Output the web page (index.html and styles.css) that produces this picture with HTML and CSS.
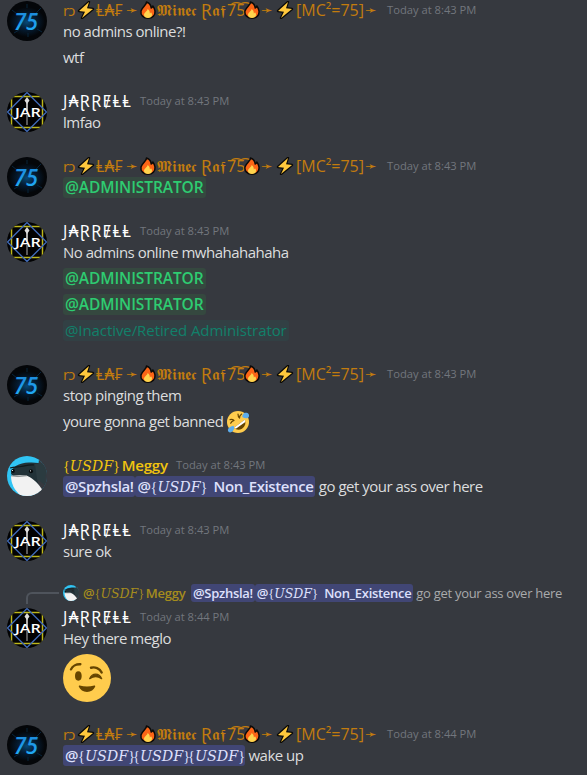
FILE: index.html
```
<!DOCTYPE html>
<html lang="en">
<head>
<meta charset="utf-8">
<title>Chat</title>
<link rel="stylesheet" href="styles.css">
</head>
<body>
<svg class="defs" aria-hidden="true">
  <defs>
    <radialGradient id="glow"><stop offset="0" stop-color="#064a78"/><stop offset=".5" stop-color="#051c32"/><stop offset="1" stop-color="#040609"/></radialGradient>
    <linearGradient id="blue" x1="0" y1="0" x2="0" y2="1"><stop offset="0" stop-color="#1b7fd4"/><stop offset="1" stop-color="#21b4fb"/></linearGradient>
    <clipPath id="round"><circle cx="20" cy="20" r="20"/></clipPath>
    <symbol id="av-raf" viewBox="0 0 40 40">
      <circle cx="20" cy="20" r="20" fill="#040609"/>
      <ellipse cx="20" cy="21" rx="18" ry="15" fill="url(#glow)"/>
      <path d="M5 9l5 4M34 7l-5 5M7 32l5-3M35 31l-5-3M20 3v4M21 36v-4" stroke="#07243b" stroke-width="1"/>
      <text class="raf-num" x="7" y="29" textLength="24" lengthAdjust="spacingAndGlyphs" fill="url(#blue)">75</text>
    </symbol>
    <symbol id="av-jar" viewBox="0 0 40 40">
      <g clip-path="url(#round)">
        <rect width="40" height="40" fill="#020203"/>
        <rect x="4.500" y="4.500" width="31" height="31" fill="none" stroke="#bdb71b" stroke-width="1.500"/>
        <path d="M20 .5L39.500 20 20 39.500.5 20z" fill="none" stroke="#3f69b5" stroke-width="1.400"/>
        <text class="jar-text" x="8" y="24.500" textLength="26" lengthAdjust="spacingAndGlyphs" fill="#fff">JAR</text>
        <path d="M20 7v12" stroke="#e8e8e8" stroke-width="1.500"/><path d="M20 5l2.500 3.500L20 12l-2.500-3.500z" fill="#ddd"/>
        <path d="M20 23v10" stroke="#777" stroke-width="1.500"/>
      </g>
    </symbol>
    <symbol id="av-whale" viewBox="0 0 40 40">
      <g clip-path="url(#round)">
        <rect width="40" height="40" fill="#30c4f4"/>
        <path d="M4 18C4 11 12 7 22 6.500c6-.3 11 .5 14 2L40 10v30H30z" fill="#223238"/>
        <path d="M32 3l6 0 4 8v29h-8l-4-18z" fill="#36393f"/>
        <path d="M28 8l8-1 3 8-1 14-8-6z" fill="#2b3b40"/>
        <path d="M4 20c6-1 11-1 16-.3 7 3.300 12 8.300 16 15.300L27 40H14C7 34 4 27 4 20z" fill="#f2f2f2"/>
        <path d="M4 19.800l7 .8 9-.9" fill="none" stroke="#8b9294" stroke-width="1"/>
        <path d="M3 12c4-1 8-1 11-1.500s9-2 13-1.500" fill="none" stroke="#10191c" stroke-width="1.200"/>
        <circle cx="6" cy="15" r="1.900" fill="#070b0d"/><circle cx="24" cy="15.300" r="2" fill="#070b0d"/>
        <circle cx="5.500" cy="14.500" r=".6" fill="#fff"/><circle cx="23.500" cy="14.800" r=".6" fill="#fff"/>
      </g>
    </symbol>
    <symbol id="bolt" viewBox="0 0 18 18">
      <path d="M12 1L2 10l6 .8L5 17 16 8l-6-.8z" fill="#ffc83d" stroke="#0b0a08" stroke-width="2.400" stroke-linejoin="round" paint-order="stroke"/>
    </symbol>
    <symbol id="fire" viewBox="0 0 18 18">
      <path d="M7.500 1c.3 3-4.500 5-5.500 9-.8 4 2.500 7.200 7 7.200s7.500-3 7-7.200c-.3-2.500-1.500-4-2.200-5-.3 1.200-.8 1.700-1.600 2C12 4.500 10.500 2 7.500 1z" fill="#fb6516" stroke="#0b0a08" stroke-width="1.500" stroke-linejoin="round"/>
      <path d="M8.500 8c.3 2-3.500 3.200-3.500 6 0 2 1.800 3 4 3s4-1 4-3.200c0-1-.5-2-1-2.500-.3.700-.7 1-1.200 1.100C11 10.500 10 9 8.500 8z" fill="#ffd44d"/>
    </symbol>
    <symbol id="rofl" viewBox="0 0 36 36">
      <circle cx="18" cy="18" r="18" fill="#ffcc4d"/>
      <path d="M29 14.500c2.500 5 .5 11.500-4.500 14.500-4.500 2.500-9.500 2-13-1.500z" fill="#664500"/>
      <path d="M29 14.500l1 3.500L14.500 29l-3-1.500z" fill="#fff"/>
      <path d="M5 14c3-.5 5 0 6.500 1.300M6 20c1-2.500 2.500-4 5.500-4.700M18 5c0 3 .8 5 2.500 6.500M24 5c-2.500 1.500-3.700 3.500-3.500 6.500" fill="none" stroke="#664500" stroke-width="2" stroke-linecap="round"/>
      <path d="M25 10c0-5 3-8 7-7 3 .8 4.500 3 4 5.500-.8 4-6 4.500-11 1.500zM11 24c1.500 4.500 0 9-3.500 10.500S1 34 1.500 30.500 6 25 11 24z" fill="#5dadec"/>
    </symbol>
    <symbol id="wink" viewBox="0 0 36 36">
      <circle cx="18" cy="18" r="18" fill="#ffcc4d"/>
      <ellipse cx="11.500" cy="16.500" rx="2.500" ry="3.500" fill="#664500"/>
      <path d="M20 18.500c2-4.500 7-4.500 9 0-3-2-6-2-9 0z" fill="#664500" stroke="#664500" stroke-linejoin="round"/>
      <path d="M6 11.500c1-2.500 4-4 7-3.800M21 10.300c3-.8 6.500.4 8 3.500" fill="none" stroke="#664500" stroke-width="1.800" stroke-linecap="round"/>
      <path d="M12.500 23.600c3.500 1 7.500 1 11 0 .6 0 .8.500.6 1-1 2.300-3.100 3.900-6.100 3.900s-5.100-1.600-6.100-3.900c-.2-.5 0-1 .6-1z" fill="#664500"/>
    </symbol>
  </defs>
</svg>
<main class="chat">
  <article class="message">
    <svg class="avatar"><use href="#av-raf"/></svg>
    <div class="body">
      <header class="head"><span class="name raf"><span class="ro">rɔ</span><svg class="mark"><use href="#bolt"/></svg><span class="laf">Ⱡ₳₣</span><span class="arrow">➛</span><svg class="mark"><use href="#fire"/></svg><span class="minec">𝕸𝖎𝖓𝖊𝖈</span><span class="r">Ɽ</span><span class="af">𝖆𝖋</span><span class="num">7͡5͡</span><svg class="mark"><use href="#fire"/></svg><span class="arrow wide">➛</span><svg class="mark"><use href="#bolt"/></svg><span class="mc">[MC²=75]</span><span class="arrow last">➛</span></span><time>Today at 8:43 PM</time></header>
      <p class="line">no admins online?!</p>
      <p class="line">wtf</p>
    </div>
  </article>
  <article class="message">
    <svg class="avatar"><use href="#av-jar"/></svg>
    <div class="body">
      <header class="head"><span class="name jar">J₳ⱤⱤɆⱠⱠ</span><time>Today at 8:43 PM</time></header>
      <p class="line">lmfao</p>
    </div>
  </article>
  <article class="message">
    <svg class="avatar"><use href="#av-raf"/></svg>
    <div class="body">
      <header class="head"><span class="name raf"><span class="ro">rɔ</span><svg class="mark"><use href="#bolt"/></svg><span class="laf">Ⱡ₳₣</span><span class="arrow">➛</span><svg class="mark"><use href="#fire"/></svg><span class="minec">𝕸𝖎𝖓𝖊𝖈</span><span class="r">Ɽ</span><span class="af">𝖆𝖋</span><span class="num">7͡5͡</span><svg class="mark"><use href="#fire"/></svg><span class="arrow wide">➛</span><svg class="mark"><use href="#bolt"/></svg><span class="mc">[MC²=75]</span><span class="arrow last">➛</span></span><time>Today at 8:43 PM</time></header>
      <p class="line"><span class="pill admin">@ADMINISTRATOR</span></p>
    </div>
  </article>
  <article class="message">
    <svg class="avatar"><use href="#av-jar"/></svg>
    <div class="body">
      <header class="head"><span class="name jar">J₳ⱤⱤɆⱠⱠ</span><time>Today at 8:43 PM</time></header>
      <p class="line">No admins online mwhahahahaha</p>
      <p class="line"><span class="pill admin">@ADMINISTRATOR</span></p>
      <p class="line"><span class="pill admin">@ADMINISTRATOR</span></p>
      <p class="line"><span class="pill retired">@Inactive/Retired Administrator</span></p>
    </div>
  </article>
  <article class="message">
    <svg class="avatar"><use href="#av-raf"/></svg>
    <div class="body">
      <header class="head"><span class="name raf"><span class="ro">rɔ</span><svg class="mark"><use href="#bolt"/></svg><span class="laf">Ⱡ₳₣</span><span class="arrow">➛</span><svg class="mark"><use href="#fire"/></svg><span class="minec">𝕸𝖎𝖓𝖊𝖈</span><span class="r">Ɽ</span><span class="af">𝖆𝖋</span><span class="num">7͡5͡</span><svg class="mark"><use href="#fire"/></svg><span class="arrow wide">➛</span><svg class="mark"><use href="#bolt"/></svg><span class="mc">[MC²=75]</span><span class="arrow last">➛</span></span><time>Today at 8:43 PM</time></header>
      <p class="line">stop pinging them</p>
      <p class="line">youre gonna get banned <svg class="emoji"><use href="#rofl"/></svg></p>
    </div>
  </article>
  <article class="message">
    <svg class="avatar"><use href="#av-whale"/></svg>
    <div class="body">
      <header class="head"><span class="name meggy"><span class="usdf">{𝑈𝑆𝐷𝐹}</span> Meggy</span><time>Today at 8:43 PM</time></header>
      <p class="line"><span class="pill user">@Spzhsla!</span><span class="pill user">@<span class="usdf">{𝑈𝑆𝐷𝐹}</span><span class="rest">Non_Existence</span></span> go get your ass over here</p>
    </div>
  </article>
  <article class="message">
    <svg class="avatar"><use href="#av-jar"/></svg>
    <div class="body">
      <header class="head"><span class="name jar">J₳ⱤⱤɆⱠⱠ</span><time>Today at 8:43 PM</time></header>
      <p class="line">sure ok</p>
    </div>
  </article>
  <div class="reply">
    <span class="spine"></span>
    <svg class="mini"><use href="#av-whale"/></svg>
    <span class="reply-name">@<span class="usdf">{𝑈𝑆𝐷𝐹}</span> Meggy</span>
    <span class="reply-text"><span class="pill user">@Spzhsla!</span><span class="pill user">@<span class="usdf">{𝑈𝑆𝐷𝐹}</span><span class="rest">Non_Existence</span></span> <span class="quote">go get your ass over here</span></span>
  </div>
  <article class="message replying">
    <svg class="avatar"><use href="#av-jar"/></svg>
    <div class="body">
      <header class="head"><span class="name jar">J₳ⱤⱤɆⱠⱠ</span><time>Today at 8:44 PM</time></header>
      <p class="line">Hey there meglo</p>
      <svg class="jumbo"><use href="#wink"/></svg>
    </div>
  </article>
  <article class="message">
    <svg class="avatar"><use href="#av-raf"/></svg>
    <div class="body">
      <header class="head"><span class="name raf"><span class="ro">rɔ</span><svg class="mark"><use href="#bolt"/></svg><span class="laf">Ⱡ₳₣</span><span class="arrow">➛</span><svg class="mark"><use href="#fire"/></svg><span class="minec">𝕸𝖎𝖓𝖊𝖈</span><span class="r">Ɽ</span><span class="af">𝖆𝖋</span><span class="num">7͡5͡</span><svg class="mark"><use href="#fire"/></svg><span class="arrow wide">➛</span><svg class="mark"><use href="#bolt"/></svg><span class="mc">[MC²=75]</span><span class="arrow last">➛</span></span><time>Today at 8:44 PM</time></header>
      <p class="line"><span class="pill user">@<span class="usdf">{𝑈𝑆𝐷𝐹}</span><span class="usdf">{𝑈𝑆𝐷𝐹}</span><span class="usdf">{𝑈𝑆𝐷𝐹}</span></span> wake up</p>
    </div>
  </article>
</main>
</body>
</html>
```
FILE: styles.css
```
* { box-sizing: border-box; }
body {
  margin: 0;
  height: 775px;
  overflow: hidden;
  background: #36393f;
  color: #dcddde;
  font: 15px/20px "Open Sans", "Noto Sans", sans-serif;
  letter-spacing: -0.5px;
}
.defs { position: absolute; width: 0; height: 0; }
.chat { display: flex; flex-direction: column; margin-top: -1px; }
.message { display: flex; gap: 16px; padding-left: 7px; margin-bottom: 21px; }
.avatar { width: 40px; height: 40px; margin-top: 2px; flex: none; }
.raf-num { font: italic 600 24px "Open Sans", sans-serif; letter-spacing: 0; }
.jar-text { font: 600 12.500px "Open Sans", sans-serif; letter-spacing: 0; }
.body { display: flex; flex-direction: column; gap: 4px; white-space: nowrap; }
.head { display: flex; align-items: center; height: 22px; margin-bottom: -4px; }
.line { margin: 0; height: 22px; }
.name { font-weight: 500; }
.raf { display: flex; align-items: center; height: 22px; color: #c27c0e; letter-spacing: 0; font-weight: 400; }
.raf > span { flex: none; line-height: 18px; }
.ro { width: 14px; letter-spacing: -1px; }
.mark { width: 18px; height: 18px; flex: none; }
.laf { width: 31px; padding-left: 1px; font-size: 16px; }
.arrow { width: 13px; font-size: 14px; }
.raf .minec { width: 44px; font-size: 16px; line-height: 18px; }
.r { width: 11px; font-size: 17px; }
.raf .af { width: 15px; font-size: 16px; line-height: 18px; }
.num { width: 16px; font-size: 16px; }
.wide { width: 15px; }
.mc { width: 71px; padding-left: 2px; font-size: 16px; }
.jar { width: 68px; color: #fff; font-size: 16px; letter-spacing: 1.400px; font-weight: 400; }
.meggy { color: #f1c40f; width: 105px; letter-spacing: -0.200px; font-weight: 600; }
time { margin-left: 9px; font-size: 11.200px; color: #72767d; letter-spacing: 0; }
.meggy + time { margin-left: 8px; }
.usdf {
  display: inline-block;
  width: 55px;
  font-family: "Liberation Serif", "DejaVu Serif", serif;
  font-size: 14.300px;
  line-height: 16px;
  font-weight: 400;
  letter-spacing: 0;
}
.pill {
  display: inline-block;
  height: 21px;
  line-height: 20px;
  padding: 0 2px;
  border-radius: 3px;
  font-weight: 600;
  letter-spacing: -0.400px;
  vertical-align: top;
}
.admin { width: 143px; color: #2ecc71; background: #35483f; font-size: 15.500px; letter-spacing: -0.080px; }
.retired { color: #11806a; background: #324044; font-weight: 500; letter-spacing: -0.080px; }
.user { color: #dee0fc; background: #414675; }
.rest { margin-left: 8px; }
.emoji { width: 22px; height: 22px; vertical-align: top; }
.jumbo { width: 48px; height: 48px; }
.reply {
  display: flex;
  align-items: center;
  height: 18px;
  margin: 0 0 4px;
  padding-left: 26px;
  font-size: 13px;
  line-height: 18px;
  white-space: nowrap;
}
.spine {
  width: 33px;
  height: 12px;
  margin: 10px 4px 0 0;
  border: solid #4f545c;
  border-width: 2px 0 0 2px;
  border-radius: 6px 0 0 0;
}
.mini { width: 16px; height: 16px; margin-right: 4px; }
.reply-name { width: 108px; color: #a58c1d; font-weight: 600; letter-spacing: -0.200px; }
.reply .usdf { width: 48px; font-size: 12.500px; }
.reply-text .pill { height: 18px; line-height: 18px; letter-spacing: -0.300px; }
.quote { color: #a9aaac; letter-spacing: -0.280px; }
```
